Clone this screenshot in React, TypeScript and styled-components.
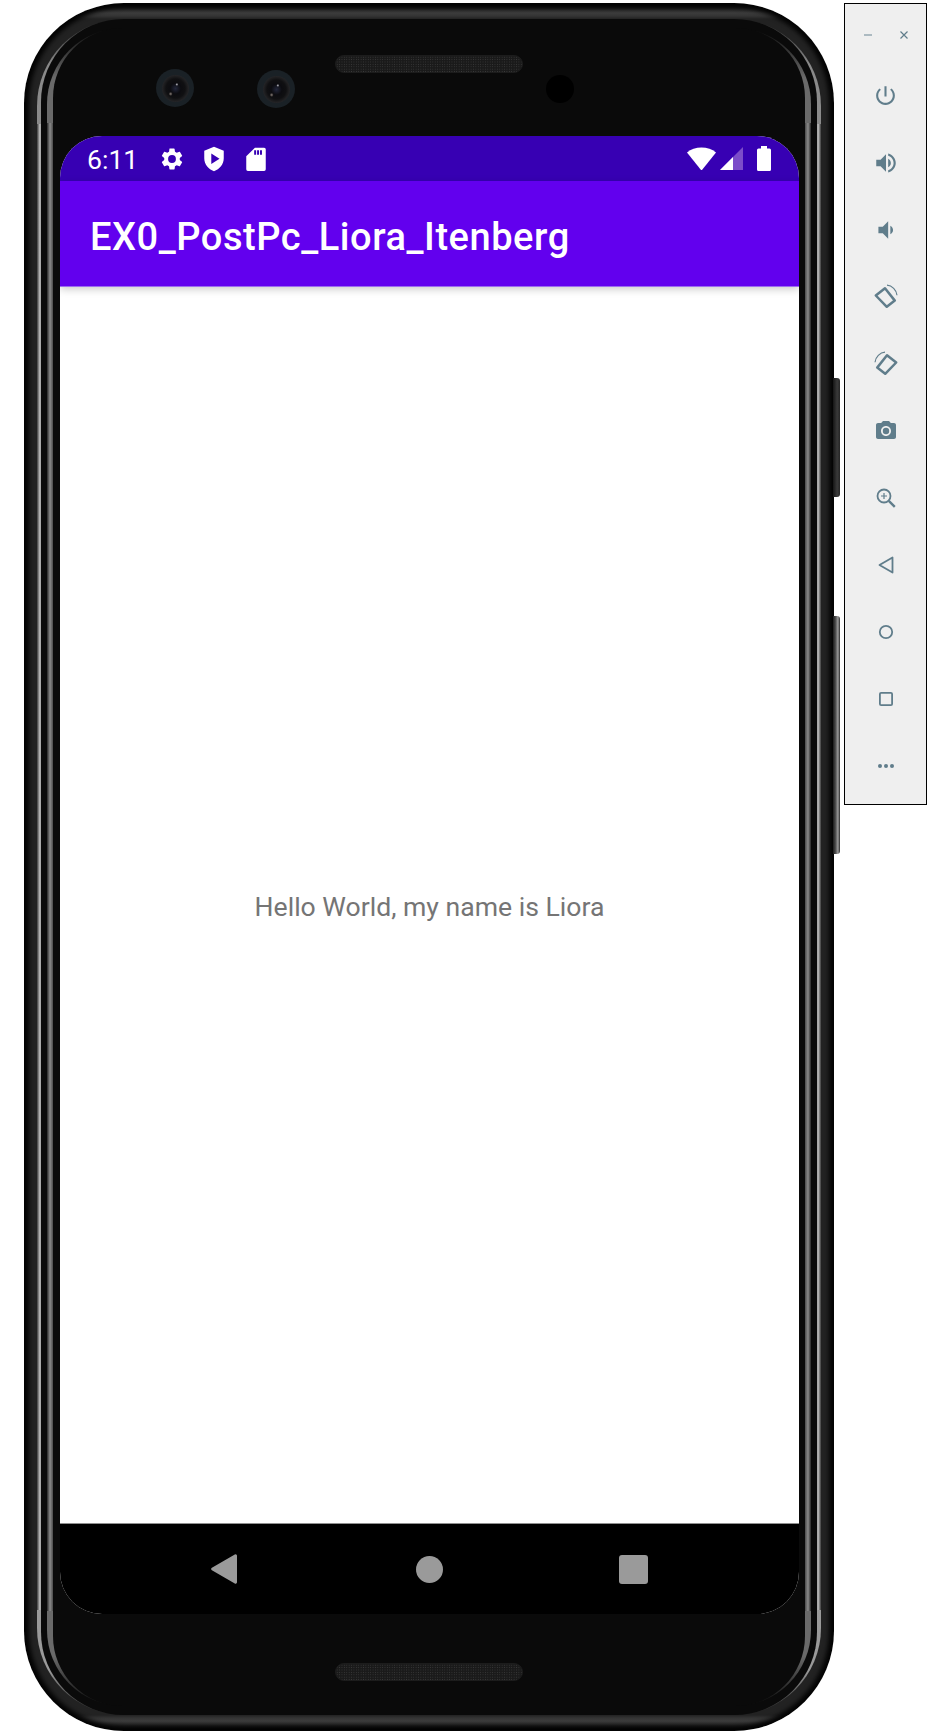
import type { ReactNode } from 'react';
import { createGlobalStyle, styled } from 'styled-components';

const GlobalStyle = createGlobalStyle`
  html, body {
    margin: 0;
    padding: 0;
    background: #ffffff;
  }
`;

const Page = styled.div`
  width: 935px;
  height: 1733px;
  display: flex;
  align-items: flex-start;
  padding: 3px 0 0 24px;
  box-sizing: border-box;
  gap: 10px;
  overflow: hidden;
`;

const Phone = styled.div`
  position: relative;
  flex: none;
  width: 810px;
  height: 1728px;
  box-sizing: border-box;
  padding: 16px 13px;
  border-radius: 100px;
  background-color: #222222;
  background-image:
    linear-gradient(180deg, #0a0a0a 0, #3c3c3c 10px, #343434 13px, #222222 16px, #222222 calc(100% - 16px), #343434 calc(100% - 13px), #3c3c3c calc(100% - 10px), #0a0a0a 100%);
  box-shadow: inset 0 0 4px 5px #040404;
`;

const OuterRing = styled.div`
  height: 100%;
  box-sizing: border-box;
  padding: 0 4px;
  border-radius: 87px;
  background:
    linear-gradient(90deg, #3a3a3a 0, #c8c8c8 3px, #8a8a8a 4px, transparent 4px, transparent calc(100% - 4px), #8a8a8a calc(100% - 4px), #c8c8c8 calc(100% - 3px), #3a3a3a 100%) center / 100% calc(100% - 210px) no-repeat,
    linear-gradient(180deg, #222222 0, #8a8a8a 45px, #9a9a9a calc(100% - 45px), #222222 100%);
`;

const DarkRing = styled.div`
  height: 100%;
  box-sizing: border-box;
  padding: 9px 6px;
  border-radius: 83px;
  background: #0a0a0a;
`;

const InnerRing = styled.div`
  height: 100%;
  box-sizing: border-box;
  padding: 0 6px;
  border-radius: 76px;
  background:
    linear-gradient(90deg, #262626 0, #8c8c8c 3px, #4a4a4a 6px, transparent 6px, transparent calc(100% - 6px), #4a4a4a calc(100% - 6px), #8c8c8c calc(100% - 3px), #262626 100%) center / 100% calc(100% - 190px) no-repeat,
    linear-gradient(180deg, #0a0a0a 0, #6a6a6a 50px, #6a6a6a calc(100% - 50px), #0a0a0a 100%);
`;

const Body = styled.div`
  height: 100%;
  display: flex;
  flex-direction: column;
  box-sizing: border-box;
  padding: 0 6px 0 7px;
  border-radius: 70px;
  background: #0a0a0a;
`;

const TopBezel = styled.div`
  position: relative;
  flex: none;
  height: 108px;
`;

const BottomBezel = styled.div`
  position: relative;
  flex: 1;
`;

const Speaker = styled.div<{ $top: number }>`
  position: absolute;
  left: 275px;
  top: ${(p) => p.$top}px;
  width: 188px;
  height: 18px;
  border-radius: 9px;
  border: 1px solid #1c1c1c;
  box-sizing: border-box;
  background-color: #1a1a1a;
  background-image: radial-gradient(#3c3c3c 0.7px, transparent 0.8px);
  background-size: 2.4px 2.4px;
`;

const Camera = styled.div<{ $left: number; $top: number }>`
  position: absolute;
  left: ${(p) => p.$left}px;
  top: ${(p) => p.$top}px;
  width: 38px;
  height: 38px;
  border-radius: 50%;
  background: #1a2126;
  display: flex;
  align-items: center;
  justify-content: center;
`;

const Lens = styled.div`
  width: 27px;
  height: 27px;
  border-radius: 50%;
  background:
    radial-gradient(circle at 55% 35%, #c8c8d0 0, transparent 1.5px),
    radial-gradient(circle at 32% 70%, #8a7f78 0, transparent 2px),
    radial-gradient(circle at 50% 50%, #22263a 0, #0c0c10 28%, #101012 50%, #343436 85%, #0e0e10 100%);
`;

const PunchHole = styled.div`
  position: absolute;
  left: 486px;
  top: 47px;
  width: 28px;
  height: 28px;
  border-radius: 50%;
  background: #000000;
`;

const Screen = styled.div`
  flex: none;
  height: 1478px;
  display: flex;
  flex-direction: column;
  border-radius: 42px;
  overflow: hidden;
  background: #ffffff;
`;

const StatusBar = styled.div`
  flex: none;
  height: 45px;
  display: flex;
  align-items: center;
  padding: 0 28px 0 27px;
  background: #3700b3;
  color: #ffffff;
  font-family: Roboto, sans-serif;
`;

const Clock = styled.span`
  font-size: 26.6px;
  line-height: 45px;
  padding-top: 1px;
  width: 72px;
`;

const StatusIcons = styled.div`
  display: flex;
  align-items: center;
  gap: 16px;
  flex: 1;
`;

const SignalIcons = styled.div`
  display: flex;
  align-items: center;
  gap: 4px;
`;

const Battery = styled.svg`
  margin-left: 10px;
`;

const AppBar = styled.header`
  flex: none;
  height: 105px;
  box-sizing: border-box;
  display: flex;
  align-items: center;
  padding: 6px 0 0 30px;
  background: #6200ee;
  color: #ffffff;
  font-family: Roboto, sans-serif;
  font-weight: 500;
  font-size: 38px;
  letter-spacing: 0.55px;
  box-shadow: 0 1px 0 #9c6bf0, 0 3px 8px rgba(0, 0, 0, 0.22);
  position: relative;
`;

const Content = styled.main`
  flex: 1;
  display: flex;
  align-items: center;
  justify-content: center;
  padding-top: 3px;
  font-family: Roboto, sans-serif;
  font-size: 26.6px;
  color: #757575;
`;

const NavBar = styled.nav`
  flex: none;
  height: 91px;
  display: flex;
  align-items: center;
  justify-content: space-between;
  padding: 0 151px;
  background: #000000;
  border-top: 1px solid #8f8f8f;
  box-sizing: border-box;
`;

const HomeDot = styled.div`
  width: 27px;
  height: 27px;
  border-radius: 50%;
  background: #9a9a9a;
`;

const RecentSquare = styled.div`
  width: 29px;
  height: 29px;
  border-radius: 3px;
  background: #9a9a9a;
`;

const SideKey = styled.div<{ $top: number; $height: number; $bright?: boolean }>`
  position: absolute;
  left: 809px;
  top: ${(p) => p.$top}px;
  width: 7px;
  height: ${(p) => p.$height}px;
  border-radius: 0 3px 3px 0;
  background: ${(p) =>
    p.$bright
      ? 'linear-gradient(90deg, #1a1a1a 0, #4a4a4a 35%, #9a9a9a 70%, #2a2a2a 100%)'
      : 'linear-gradient(90deg, #151515 0, #3a3a3a 60%, #262626 100%)'};
`;

const ToolPanel = styled.aside`
  flex: none;
  width: 83px;
  height: 802px;
  box-sizing: border-box;
  border: 1px solid #000000;
  background: #efefef;
  display: flex;
  flex-direction: column;
  align-items: center;
  color: #607d8b;
`;

const WindowRow = styled.div`
  display: flex;
  justify-content: space-between;
  width: 46px;
  height: 30px;
  margin-top: 16px;
  align-items: center;
  color: #90a4ae;
`;

const ToolList = styled.div`
  display: flex;
  flex-direction: column;
  margin-top: 12px;
`;

const ToolSlot = styled.div`
  width: 28px;
  height: 67px;
  display: flex;
  align-items: center;
  justify-content: center;
  svg {
    display: block;
  }
`;

const RotateSvg = styled.svg<{ $flip?: boolean }>`
  transform: ${(p) => (p.$flip ? 'scaleX(-1)' : 'none')};
`;

const Glyph = ({ size = 24, children }: { size?: number; children: ReactNode }) => (
  <svg width={size} height={size} viewBox="0 0 24 24" fill="currentColor">
    {children}
  </svg>
);

const Rotate = ({ flip }: { flip?: boolean }) => (
  <RotateSvg $flip={flip} width="26" height="26" viewBox="0 0 26 26" fill="none" stroke="currentColor">
    <path d="M2.800 11.500 12 4.200l9.800 12.400-8 6.200z" strokeWidth="2.500" strokeLinejoin="round" />
    <path d="M14 1.200c5 .3 9.500 4.700 10 10" strokeWidth="1.200" />
  </RotateSvg>
);

export default function App() {
  return (
    <Page>
      <GlobalStyle />
      <Phone>
        <SideKey $top={375} $height={119} />
        <SideKey $top={613} $height={238} $bright />
        <OuterRing>
          <DarkRing>
            <InnerRing>
              <Body>
                <TopBezel>
                  <Speaker $top={27} />
                  <Camera $left={96} $top={41}>
                    <Lens />
                  </Camera>
                  <Camera $left={197} $top={42}>
                    <Lens />
                  </Camera>
                  <PunchHole />
                </TopBezel>
                <Screen>
                  <StatusBar>
                    <Clock>6:11</Clock>
                    <StatusIcons>
                      <Glyph size={26}>
                        <path d="M19.140 12.940c.04-.3.06-.61.06-.94s-.02-.64-.07-.94l2.030-1.580a.49.49 0 0 0 .12-.61l-1.920-3.320a.49.49 0 0 0-.59-.22l-2.390.96c-.5-.38-1.030-.7-1.620-.94l-.36-2.540a.48.48 0 0 0-.48-.41h-3.840c-.24 0-.43.17-.47.41l-.36 2.540c-.59.24-1.130.57-1.620.94l-2.390-.96a.48.48 0 0 0-.59.22L2.740 8.870c-.12.21-.08.47.12.61l2.030 1.580c-.05.3-.09.63-.09.94s.02.64.07.94l-2.030 1.580a.49.49 0 0 0-.12.61l1.920 3.320c.12.22.37.29.59.22l2.390-.96c.5.38 1.030.7 1.620.94l.36 2.540c.05.24.24.41.48.41h3.840c.24 0 .44-.17.47-.41l.36-2.540c.59-.24 1.130-.56 1.620-.94l2.390.96c.22.08.47 0 .59-.22l1.920-3.320a.49.49 0 0 0-.12-.61l-2.010-1.580zM12 15.600A3.600 3.600 0 1 1 12 8.400a3.600 3.600 0 0 1 0 7.200z" />
                      </Glyph>
                      <Glyph size={26}>
                        <path fillRule="evenodd" d="M12 .8 3 4.400v7c0 5.400 3.800 10.300 9 11.800 5.200-1.500 9-6.400 9-11.800v-7L12 .8zM9.500 7v9.600l7.600-4.800L9.500 7z" />
                      </Glyph>
                      <Glyph size={26}>
                        <path fillRule="evenodd" d="M11 1.500h8.500A1.500 1.500 0 0 1 21 3v18.500a1.500 1.500 0 0 1-1.500 1.500h-15A1.500 1.500 0 0 1 3 21.500V9.500L11 1.500zM13 4v4h1.800V4H13zm2.700 0v4h1.800V4h-1.800zm-5.400 0v4h1.800V4h-1.800z" />
                      </Glyph>
                    </StatusIcons>
                    <SignalIcons>
                      <svg width="29" height="23" viewBox="0 0 29 23" fill="#ffffff">
                        <path d="M0 5.500C3.800 2.400 9 .6 14.500.6S25.200 2.400 29 5.500L15.400 22.400a1.200 1.200 0 0 1-1.800 0z" />
                      </svg>
                      <svg width="23" height="23" viewBox="0 0 23 23">
                        <path d="M0 23 23 0v23z" fill="#7c4dc9" />
                        <path d="M0 23 13 10v13z" fill="#ffffff" />
                      </svg>
                      <Battery width="14" height="25" viewBox="0 0 14 25" fill="#ffffff">
                        <path d="M4 0h6v2.500h2.500A1.500 1.500 0 0 1 14 4v19.500a1.500 1.500 0 0 1-1.500 1.500h-11A1.500 1.500 0 0 1 0 23.500V4a1.500 1.500 0 0 1 1.500-1.500H4z" />
                      </Battery>
                    </SignalIcons>
                  </StatusBar>
                  <AppBar>EX0_PostPc_Liora_Itenberg</AppBar>
                  <Content>Hello World, my name is Liora</Content>
                  <NavBar>
                    <svg width="29" height="30" viewBox="0 0 29 30" fill="#9a9a9a">
                      <path d="M23.800.4A1.500 1.500 0 0 1 26 1.700v26.600a1.500 1.500 0 0 1-2.200 1.300L.9 16.300a1.500 1.500 0 0 1 0-2.600z" />
                    </svg>
                    <HomeDot />
                    <RecentSquare />
                  </NavBar>
                </Screen>
                <BottomBezel>
                  <Speaker $top={49} />
                </BottomBezel>
              </Body>
            </InnerRing>
          </DarkRing>
        </OuterRing>
      </Phone>
      <ToolPanel>
        <WindowRow>
          <svg width="10" height="10" viewBox="0 0 10 10" stroke="currentColor" strokeWidth="1.400">
            <path d="M1 5h8" />
          </svg>
          <svg width="10" height="10" viewBox="0 0 10 10" stroke="#607d8b" strokeWidth="1.200">
            <path d="M1.500 1.500l7 7M8.500 1.500l-7 7" />
          </svg>
        </WindowRow>
        <ToolList>
          <ToolSlot>
            <Glyph size={25}>
              <path d="M13 3h-2v10h2V3zm4.830 2.170-1.420 1.420C17.990 7.860 19 9.810 19 12c0 3.870-3.130 7-7 7s-7-3.130-7-7c0-2.190 1.010-4.140 2.580-5.420L6.170 5.170C4.230 6.820 3 9.260 3 12c0 4.970 4.030 9 9 9s9-4.030 9-9c0-2.740-1.230-5.180-3.170-6.830z" />
            </Glyph>
          </ToolSlot>
          <ToolSlot>
            <Glyph size={26}>
              <path d="M3 9v6h4l5 5V4L7 9H3zm13.500 3c0-1.770-1.020-3.290-2.500-4.030v8.050c1.480-.73 2.500-2.250 2.500-4.020zM14 3.230v2.060c2.890.86 5 3.540 5 6.710s-2.110 5.850-5 6.710v2.060c4.010-.91 7-4.490 7-8.770s-2.990-7.860-7-8.770z" />
            </Glyph>
          </ToolSlot>
          <ToolSlot>
            <Glyph size={26}>
              <path d="M18.500 12c0-1.770-1.020-3.290-2.500-4.030v8.050c1.480-.73 2.500-2.250 2.500-4.020zM5 9v6h4l5 5V4L9 9H5z" />
            </Glyph>
          </ToolSlot>
          <ToolSlot>
            <Rotate />
          </ToolSlot>
          <ToolSlot>
            <Rotate flip />
          </ToolSlot>
          <ToolSlot>
            <Glyph size={24}>
              <circle cx="12" cy="12" r="3.200" />
              <path d="M9 2 7.170 4H4c-1.100 0-2 .9-2 2v12c0 1.100.9 2 2 2h16c1.100 0 2-.9 2-2V6c0-1.100-.9-2-2-2h-3.170L15 2H9zm3 15c-2.760 0-5-2.240-5-5s2.240-5 5-5 5 2.240 5 5-2.240 5-5 5z" />
            </Glyph>
          </ToolSlot>
          <ToolSlot>
            <svg width="20" height="20" viewBox="0 0 20 20" fill="none" stroke="currentColor" strokeWidth="1.800">
              <circle cx="8" cy="8" r="6.500" />
              <path d="M12.800 12.800l6 6" strokeWidth="2.400" />
              <path d="M8 5v6M5 8h6" strokeWidth="1.200" />
            </svg>
          </ToolSlot>
          <ToolSlot>
            <svg width="16" height="18" viewBox="0 0 16 18" fill="none" stroke="currentColor" strokeWidth="1.800" strokeLinejoin="round">
              <path d="M14.500 1.500v15L1.500 9z" />
            </svg>
          </ToolSlot>
          <ToolSlot>
            <svg width="16" height="16" viewBox="0 0 16 16" fill="none" stroke="currentColor" strokeWidth="1.800">
              <circle cx="8" cy="8" r="6.200" />
            </svg>
          </ToolSlot>
          <ToolSlot>
            <svg width="14" height="14" viewBox="0 0 14 14" fill="none" stroke="currentColor" strokeWidth="1.800">
              <rect x="0.900" y="0.900" width="12.200" height="12.200" rx="1.200" />
            </svg>
          </ToolSlot>
          <ToolSlot>
            <svg width="16" height="4" viewBox="0 0 16 4" fill="currentColor">
              <circle cx="2" cy="2" r="2" />
              <circle cx="8" cy="2" r="2" />
              <circle cx="14" cy="2" r="2" />
            </svg>
          </ToolSlot>
        </ToolList>
      </ToolPanel>
    </Page>
  );
}
